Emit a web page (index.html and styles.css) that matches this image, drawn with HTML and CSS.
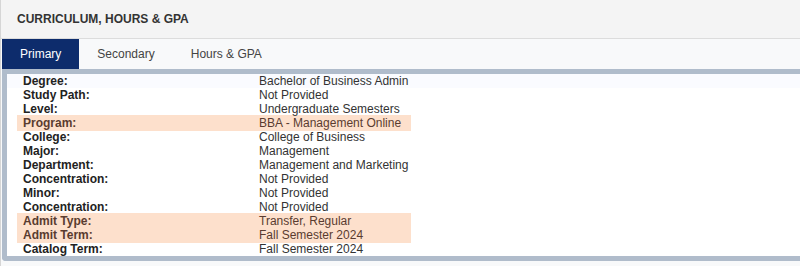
FILE: index.html
```html
<!DOCTYPE html>
<html>
<head>
<meta charset="utf-8">
<link rel="stylesheet" href="styles.css">
</head>
<body>
<div class="card">
  <div class="card-header">CURRICULUM, HOURS &amp; GPA</div>
  <div class="card-body">
    <div class="tabs">
      <div class="tab active">Primary</div>
      <div class="tab">Secondary</div>
      <div class="tab">Hours &amp; GPA</div>
    </div>
    <div class="panel">
      <table class="info">
        <tr><th>Degree:</th><td>Bachelor of Business Admin</td></tr>
        <tr><th>Study Path:</th><td>Not Provided</td></tr>
        <tr><th>Level:</th><td>Undergraduate Semesters</td></tr>
        <tr class="hl"><th>Program:</th><td>BBA - Management Online</td></tr>
        <tr><th>College:</th><td>College of Business</td></tr>
        <tr><th>Major:</th><td>Management</td></tr>
        <tr><th>Department:</th><td>Management and Marketing</td></tr>
        <tr><th>Concentration:</th><td>Not Provided</td></tr>
        <tr><th>Minor:</th><td>Not Provided</td></tr>
        <tr><th>Concentration:</th><td>Not Provided</td></tr>
        <tr class="hl hl-split"><th>Admit Type:</th><td>Transfer, Regular</td></tr>
        <tr class="hl"><th>Admit Term:</th><td>Fall Semester 2024</td></tr>
        <tr><th>Catalog Term:</th><td>Fall Semester 2024</td></tr>
      </table>
    </div>
  </div>
</div>
</body>
</html>
```

FILE: styles.css
```css
html, body {
  margin: 0;
  padding: 0;
  background: #ffffff;
  overflow: hidden;
}
body {
  font-family: "Liberation Sans", Arial, sans-serif;
  font-size: 12px;
  color: #333;
}
.card {
  width: 830px;
  border-left: 1px solid #d6d6d6;
  background: #f8f9fa;
  height: 266px;
}
.card-header {
  height: 38px;
  box-sizing: border-box;
  background: #f4f4f4;
  border-bottom: 1px solid #dcdcdc;
  padding: 12px 0 0 16px;
  font-weight: bold;
  font-size: 12px;
  color: #333;
  line-height: 14px;
  height: 39px;
}
.card-body {
  padding-left: 1px;
}
.tabs {
  display: flex;
  height: 30px;
  background: #f8f9fa;
}
.tab {
  padding: 0 18px;
  line-height: 30px;
  font-size: 12px;
  color: #444;
}
.tab.active {
  background: #0d2c6c;
  color: #fff;
}
.panel {
  border: 5px solid #b0bccb;
  border-right: none;
  border-bottom-left-radius: 4px;
  background: linear-gradient(#fafbff 0, #fafbff 14px, #fff 14px);
  padding-left: 10px;
}
.info {
  border-collapse: collapse;
}
.info th, .info td {
  padding: 0;
  height: 14px;
  line-height: 14px;
  font-size: 12px;
  text-align: left;
  white-space: nowrap;
}
.info th {
  width: 236px;
  padding-left: 6px;
  font-weight: bold;
  color: #222;
}
.info td {
  padding-right: 3px;
  color: #333;
}
.info tr.hl th, .info tr.hl td {
  background: #fde0cc;
  box-shadow: 0 1px 0 #fde0cc, 0 -1px 0 #fde0cc;
  color: #5a3c30;
}
.info tr.hl-split th, .info tr.hl-split td {
  box-shadow: 0 -1px 0 #fde0cc, inset 0 -1px 0 #fbcaa6;
}
```
